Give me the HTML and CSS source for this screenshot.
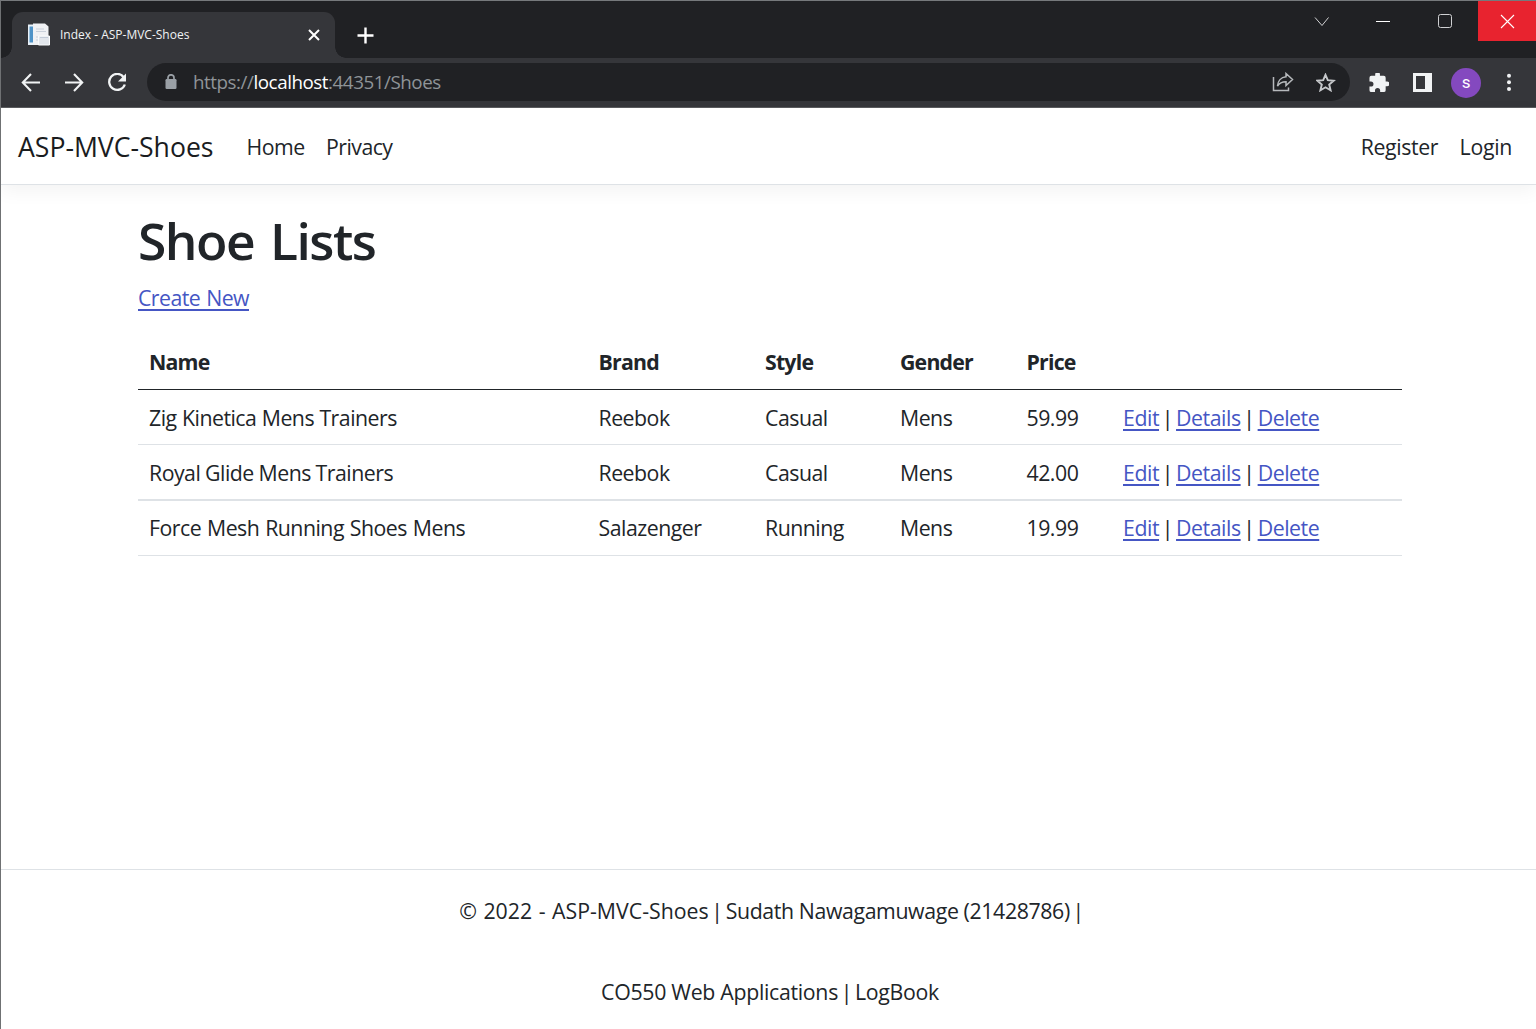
FILE: index.html
```html
<!DOCTYPE html>
<html lang="en">
<head>
<meta charset="utf-8">
<title>Index - ASP-MVC-Shoes</title>
<link rel="stylesheet" href="styles.css">
</head>
<body>
<div class="window">
  <div class="tabstrip">
    <div class="tab">
      <svg class="favicon" width="24" height="24" viewBox="0 0 24 24"><path d="M1 1.500h7V22H1z" fill="#e9f1f8"/><path d="M2.500 3.500h3.500v16H2.500z" fill="#4f93c7"/><path d="M6 .5h12l3.500 3V22H7L6 20z" fill="#f0f1f4"/><path d="M9 6h8M9 8.500h10M9 14h3M9 17h3" stroke="#c9d0da"/><path d="M11.500 13h11v9h-11z" fill="#e2e6ec" stroke="#fafbfc"/><path d="M13 14.500h8" stroke="#c3cbd8"/></svg>
      <span class="tab-title">Index - ASP-MVC-Shoes</span>
      <svg class="tab-close" width="12" height="12" viewBox="0 0 12 12"><path d="M1 1l10 10M11 1L1 11" stroke="#fff" stroke-width="2"/></svg>
    </div>
    <svg class="tab-new" width="17" height="17" viewBox="0 0 17 17"><path d="M8.500 0.500v16M0.500 8.500h16" stroke="#fff" stroke-width="2.400"/></svg>
    <div class="controls">
      <span class="control"><svg width="16" height="16" viewBox="0 0 16 16"><path d="M2 4.500l7 8 6.500-8" fill="none" stroke="#d0d1d3"/></svg></span>
      <span class="control"><svg width="16" height="16" viewBox="0 0 16 16"><path d="M1 8.500h14" stroke="#fff"/></svg></span>
      <span class="control"><svg width="16" height="16" viewBox="0 0 16 16"><rect x="1.500" y="1.500" width="13" height="13" rx="2" fill="none" stroke="#d0d1d3"/></svg></span>
      <span class="control control-close"><svg width="16" height="16" viewBox="0 0 16 16"><path d="M2 2l13 13M15 2L2 15" stroke="#fff" stroke-width="1.100"/></svg></span>
    </div>
  </div>
  <div class="toolbar">
    <svg class="nav-icon" width="20" height="20" viewBox="0 0 20 20"><path d="M19 9.500H2M10 1L1.800 9.500l8.200 8.500" fill="none" stroke="#f1f3f4" stroke-width="2.100"/></svg>
    <svg class="nav-icon" width="20" height="20" viewBox="0 0 20 20"><path d="M1 9.500h17M10 1l8.200 8.500-8.200 8.500" fill="none" stroke="#f1f3f4" stroke-width="2.100"/></svg>
    <svg class="nav-icon" width="20" height="20" viewBox="0 0 20 20"><path d="M16.700 4.200A8 8 0 1 0 17.800 11.500" fill="none" stroke="#f1f3f4" stroke-width="2.300"/><path d="M19 .5v8h-8z" fill="#f1f3f4"/></svg>
    <div class="omnibox">
      <svg class="lock" width="12" height="16" viewBox="0 0 12 16"><rect x="0.500" y="5" width="11" height="10" rx="1.200" fill="#9aa0a6"/><path d="M3 6V3.800a3 3 0 0 1 6 0V6" fill="none" stroke="#9aa0a6" stroke-width="1.700"/></svg>
      <span class="url">https://<b class="host">localhost</b>:44351/Shoes</span>
      <svg class="share" width="22" height="20" viewBox="0 0 22 20"><path d="M1.500 5v13.500h15V15.500" fill="none" stroke="#b6b9bc" stroke-width="1.500"/><path d="M14 1.500l6.500 6L14 13.500v-3.700c-4 0-6.500 1-8.500 4.200.3-5 3.500-8.700 8.500-9.200z" fill="none" stroke="#b6b9bc" stroke-width="1.500"/></svg>
      <svg width="20" height="19" viewBox="0 0 20 19"><path d="M9.500 1.800l2.300 5.400 5.900.5-4.500 3.900 1.400 5.700-5.100-3-5.100 3 1.400-5.700L1.300 7.700l5.900-.5z" fill="none" stroke="#c6c8cb" stroke-width="1.900"/></svg>
    </div>
    <div class="actions">
      <svg width="20" height="20" viewBox="1.500 2 21 21"><path d="M20.500 11H19V7a2 2 0 0 0-2-2h-4V3.500a2.500 2.500 0 0 0-5 0V5H4a2 2 0 0 0-2 2v3.800h1.500a2.700 2.700 0 0 1 0 5.400H2V20a2 2 0 0 0 2 2h3.800v-1.500a2.700 2.700 0 0 1 5.400 0V22H17a2 2 0 0 0 2-2v-4h1.500a2.500 2.500 0 0 0 0-5z" fill="#f1f3f4"/></svg>
      <svg width="20" height="20" viewBox="0 0 20 20"><path d="M1 0h19v19H1zM4 3v13h9V3z" fill="#f1f3f4" fill-rule="evenodd"/></svg>
      <span class="avatar">s</span>
      <svg class="menu" width="4" height="20" viewBox="0 0 4 20"><g fill="#f1f3f4"><circle cx="2" cy="2.800" r="2"/><circle cx="2" cy="9.300" r="2"/><circle cx="2" cy="15.900" r="2"/></g></svg>
    </div>
  </div>
  <div class="page">
    <header class="navbar">
      <a class="brand">ASP-MVC-Shoes</a>
      <a class="nav-link">Home</a>
      <a class="nav-link">Privacy</a>
      <a class="nav-link nav-end">Register</a>
      <a class="nav-link">Login</a>
    </header>
    <main class="container">
      <h1>Shoe Lists</h1>
      <p class="create"><a class="link">Create New</a></p>
      <table class="table">
        <colgroup><col class="c-name"><col class="c-brand"><col class="c-style"><col class="c-gender"><col class="c-price"><col></colgroup>
        <thead><tr><th>Name</th><th>Brand</th><th>Style</th><th>Gender</th><th>Price</th><th></th></tr></thead>
        <tbody>
          <tr><td>Zig Kinetica Mens Trainers</td><td>Reebok</td><td>Casual</td><td>Mens</td><td>59.99</td><td class="row-actions"><a class="link">Edit</a><span class="sep">|</span><a class="link">Details</a><span class="sep">|</span><a class="link">Delete</a></td></tr>
          <tr><td>Royal Glide Mens Trainers</td><td>Reebok</td><td>Casual</td><td>Mens</td><td>42.00</td><td class="row-actions"><a class="link">Edit</a><span class="sep">|</span><a class="link">Details</a><span class="sep">|</span><a class="link">Delete</a></td></tr>
          <tr><td>Force Mesh Running Shoes Mens</td><td>Salazenger</td><td>Running</td><td>Mens</td><td>19.99</td><td class="row-actions"><a class="link">Edit</a><span class="sep">|</span><a class="link">Details</a><span class="sep">|</span><a class="link">Delete</a></td></tr>
        </tbody>
      </table>
    </main>
    <footer class="footer">
      <p><span class="copyright">© 2022 - ASP-MVC-Shoes</span><span class="sep">|</span><span class="author">Sudath Nawagamuwage (21428786)</span><span class="sep sep-end">|</span></p>
      <p>CO550 Web Applications<span class="sep">|</span>LogBook</p>
    </footer>
  </div>
</div>
</body>
</html>
```
FILE: styles.css
```css
* { box-sizing: border-box; }
body { margin: 0; background: #fff; color: #212529; font-family: "Open Sans", "Noto Sans", sans-serif; font-size: 21.3px; font-weight: 400; letter-spacing: -0.3px; }
svg { display: block; flex: none; }

/* Browser window */
.window { height: 1029px; display: flex; flex-direction: column; border-left: 1px solid #6f7173; border-top: 1px solid #76797c; overflow: hidden; }
.tabstrip { height: 57px; flex: none; display: flex; align-items: flex-start; background: #202124; }
.tab { position: relative; width: 323px; height: 46px; margin: 11px 0 0 11px; padding: 0 15px; display: flex; align-items: center; background: #35363a; border-radius: 11px 11px 0 0; }
.tab::before, .tab::after { content: ""; position: absolute; bottom: 0; width: 11px; height: 11px; }
.tab::before { left: -11px; background: radial-gradient(circle at 0 0, transparent 10.5px, #35363a 11px); }
.tab::after { right: -11px; background: radial-gradient(circle at 100% 0, transparent 10.5px, #35363a 11px); }
.tab-title { margin-left: 9px; padding-bottom: 1px; color: #f1f3f4; font-size: 12px; letter-spacing: 0; white-space: nowrap; }
.tab-close { margin-left: auto; }
.tab-new { margin: 26px 0 0 22px; }
.controls { margin-left: auto; display: flex; }
.control { width: 62px; height: 40px; display: flex; align-items: center; justify-content: center; }
.control:nth-child(3) { margin-right: 2px; }
.control-close { width: 58px; background: #e8232f; }
.toolbar { height: 50px; flex: none; display: flex; align-items: center; background: #35363a; border-bottom: 1px solid #5b5c5f; padding-left: 20px; }
.nav-icon { margin-right: 23px; }
.omnibox { width: 1203px; height: 38px; margin: -1px 0 0 -3px; padding: 0 14px 0 18px; border-radius: 19px; background: #202124; display: flex; align-items: center; }
.url { margin-left: 16px; color: #8f9498; font-size: 18.8px; line-height: 38px; letter-spacing: -.45px; }
.host { font-weight: 400; color: #fff; }
.share { margin: 0 22px 0 auto; }
.actions { display: flex; align-items: center; gap: 23px; margin-left: 19px; }
.avatar { width: 30px; height: 30px; margin: 0 -4px; border-radius: 50%; background: #8449bf; color: #fff; font: 17px/29px Roboto, sans-serif; text-align: center; }
.menu { margin-left: 7px; }

/* Site */
.page { flex: 1; display: flex; flex-direction: column; }
.navbar { height: 77px; flex: none; display: flex; align-items: center; padding: 1px 24px 0 17px; border-bottom: 1px solid #dee2e6; box-shadow: 0 6px 18px rgba(0,0,0,.05); }
.brand { font-size: 26.6px; letter-spacing: 0; margin-right: 33px; color: #1a1c1e; }
.nav-link { margin-right: 21.5px; letter-spacing: -.55px; }
.nav-link:last-child { margin-right: 0; letter-spacing: -.3px; }
.nav-end { margin-left: auto; letter-spacing: -.4px; }
.container { width: 1264px; margin-left: 137px; flex: 1; }
h1 { margin: 21px 0 0; font-size: 51.5px; font-weight: 600; line-height: 68px; letter-spacing: -1.5px; word-spacing: 4px; }
.create { margin: 7px 0 21px; line-height: 33px; letter-spacing: -.55px; word-spacing: 1px; }
.link { color: #4556c4; text-decoration: underline; text-decoration-thickness: 2px; text-underline-offset: 3px; }
.sep { display: inline-block; width: 17px; text-align: center; letter-spacing: 0; }
.table { width: 100%; table-layout: fixed; border-collapse: separate; border-spacing: 0; line-height: 33px; }
.c-name { width: 449.5px; }
.c-brand { width: 166.5px; }
.c-style { width: 135px; }
.c-gender { width: 126.5px; }
.c-price { width: 96.5px; }
th, td { height: 55px; padding: 0 11px; text-align: left; white-space: nowrap; border-bottom: 1px solid #dee2e6; letter-spacing: -.5px; }
th { font-weight: 700; border-bottom-color: #212529; letter-spacing: -.8px; padding-bottom: 2px; }
td { word-spacing: .3px; }
tbody tr:nth-child(2) td { border-bottom-width: 2px; height: 56px; word-spacing: -.3px; }
tbody tr:nth-child(3) td { padding-bottom: 2px; word-spacing: .8px; }
td.row-actions { letter-spacing: -.45px; }
.footer { height: 160px; flex: none; border-top: 1px solid #dee2e6; text-align: center; padding-left: 3px; }
.footer p { margin: 0; height: 81px; line-height: 82px; }
.copyright { letter-spacing: 0; word-spacing: 1px; }
.author { letter-spacing: -.38px; }
.sep-end { margin-right: -6px; }
```
